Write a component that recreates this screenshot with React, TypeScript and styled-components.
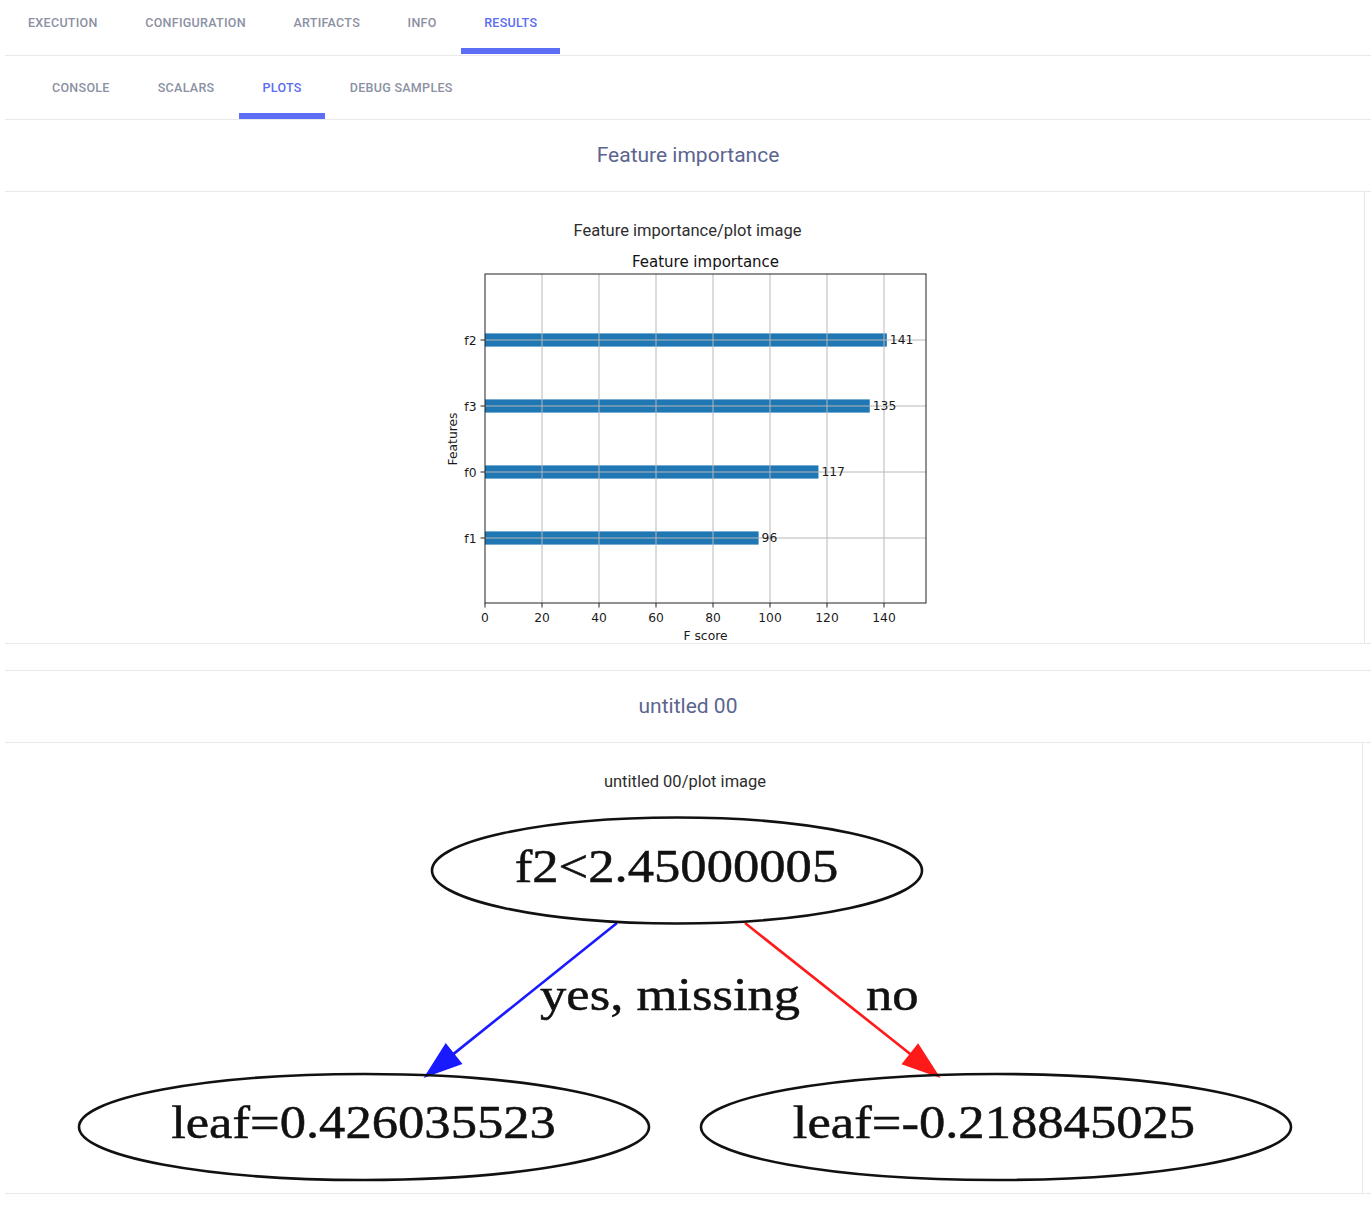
import React from 'react';
import styled, { createGlobalStyle } from 'styled-components';

const GlobalStyle = createGlobalStyle`
  html, body {
    margin: 0;
    padding: 0;
    background: #ffffff;
    font-family: Roboto, 'Liberation Sans', Arial, sans-serif;
  }
`;

const Page = styled.div`
  padding-left: 5px;
  width: 1366px;
`;

// main tabs and sub tabs share one look, only height differs
const TabBar = styled.div<{ $height: number; $padLeft?: number; $gap: number }>`
  display: flex;
  gap: ${({ $gap }) => $gap}px;
  height: ${({ $height }) => $height}px;
  box-sizing: border-box;
  padding-left: ${({ $padLeft }) => $padLeft ?? 0}px;
  border-bottom: 1px solid #e9e9e9;
`;

const Tab = styled.div<{ $active?: boolean; $height: number; $top: number }>`
  box-sizing: border-box;
  height: ${({ $height }) => $height}px;
  padding: ${({ $top }) => $top}px 23px 0;
  line-height: 14px;
  font-size: 12.5px;
  font-weight: 500;
  letter-spacing: 0.3px;
  text-transform: uppercase;
  color: ${({ $active }) => ($active ? '#5a6cf2' : '#8b90a3')};
  border-bottom: 6px solid
    ${({ $active }) => ($active ? '#5b6ef5' : 'transparent')};
  cursor: pointer;
`;

const Section = styled.section<{ $spaced?: boolean }>`
  margin-top: ${({ $spaced }) => ($spaced ? 26 : 0)}px;
`;

const SectionHeader = styled.div<{ $topLine?: boolean }>`
  height: ${({ $topLine }) => ($topLine ? 73 : 72)}px;
  box-sizing: border-box;
  padding-bottom: 2px;
  display: flex;
  align-items: center;
  justify-content: center;
  border-top: ${({ $topLine }) => ($topLine ? '1px solid #e9e9e9' : 'none')};
  border-bottom: 1px solid #e9e9e9;
  font-size: 21px;
  color: #5b6590;
`;

const Panel = styled.div`
  border-bottom: 1px solid #e9e9e9;
`;

const PanelInner = styled.div<{ $inset: number; $padLeft: number }>`
  margin-right: ${({ $inset }) => $inset}px;
  padding-left: ${({ $padLeft }) => $padLeft}px;
  padding-top: 29px;
  border-right: 1px solid #e6e6e6;
  display: flex;
  flex-direction: column;
  align-items: center;
`;

const PlotTitle = styled.div`
  font-size: 16.5px;
  line-height: 19px;
  color: #2e2e2e;
  margin-bottom: 8px;
`;

const PlotSvg = styled.svg`
  display: block;
`;

const chartFont = "'DejaVu Sans', Verdana, sans-serif";
const treeFont = "'Liberation Serif', 'Times New Roman', serif";

const features = [
  { name: 'f2', value: 141, y: 340 },
  { name: 'f3', value: 135, y: 406 },
  { name: 'f0', value: 117, y: 472 },
  { name: 'f1', value: 96, y: 538 },
];

const X0 = 485;
const PX_PER_UNIT = 2.85;
const xTicks = [0, 20, 40, 60, 80, 100, 120, 140];

const ImportanceChart: React.FC = () => (
  <PlotSvg width={495} height={395} viewBox="440 248 495 395">
    <text
      x={705.5}
      y={267}
      textAnchor="middle"
      fontFamily={chartFont}
      fontSize={15}
      fill="#111"
    >
      Feature importance
    </text>
    <rect x={X0} y={274} width={441} height={329} fill="#fff" />
    {features.map((f) => (
      <rect
        key={f.name}
        x={X0}
        y={f.y - 6.6}
        width={f.value * PX_PER_UNIT}
        height={13.2}
        fill="#1f77b4"
      />
    ))}
    {xTicks.slice(1).map((t) => (
      <line
        key={t}
        x1={X0 + t * PX_PER_UNIT}
        x2={X0 + t * PX_PER_UNIT}
        y1={274}
        y2={603}
        stroke="#b8b8b8"
        strokeWidth={1}
      />
    ))}
    {features.map((f) => (
      <line
        key={f.name}
        x1={X0}
        x2={926}
        y1={f.y}
        y2={f.y}
        stroke="#b8b8b8"
        strokeWidth={1}
      />
    ))}
    <rect
      x={X0}
      y={274}
      width={441}
      height={329}
      fill="none"
      stroke="#222"
      strokeWidth={1}
    />
    {xTicks.map((t) => (
      <g key={t}>
        <line
          x1={X0 + t * PX_PER_UNIT}
          x2={X0 + t * PX_PER_UNIT}
          y1={603}
          y2={607.5}
          stroke="#222"
        />
        <text
          x={X0 + t * PX_PER_UNIT}
          y={621.5}
          textAnchor="middle"
          fontFamily={chartFont}
          fontSize={12.3}
          fill="#1a1a1a"
        >
          {t}
        </text>
      </g>
    ))}
    {features.map((f) => (
      <g key={f.name}>
        <line x1={480.5} x2={X0} y1={f.y} y2={f.y} stroke="#222" />
        <text
          x={476.5}
          y={f.y + 4.5}
          textAnchor="end"
          fontFamily={chartFont}
          fontSize={12.3}
          fill="#1a1a1a"
        >
          {f.name}
        </text>
        <text
          x={X0 + f.value * PX_PER_UNIT + 3}
          y={f.y + 4.3}
          fontFamily={chartFont}
          fontSize={12.3}
          fill="#1a1a1a"
        >
          {f.value}
        </text>
      </g>
    ))}
    <text
      x={705.5}
      y={639.5}
      textAnchor="middle"
      fontFamily={chartFont}
      fontSize={12.3}
      fill="#1a1a1a"
    >
      F score
    </text>
    <text
      x={457}
      y={439}
      textAnchor="middle"
      fontFamily={chartFont}
      fontSize={12.3}
      fill="#1a1a1a"
      transform="rotate(-90 457 439)"
    >
      Features
    </text>
  </PlotSvg>
);

type Pt = [number, number];

// edge with a filled arrowhead ending at tip
const Edge: React.FC<{ from: Pt; tip: Pt; color: string }> = ({
  from,
  tip,
  color,
}) => {
  const dx = tip[0] - from[0];
  const dy = tip[1] - from[1];
  const len = Math.hypot(dx, dy);
  const ux = dx / len;
  const uy = dy / len;
  const bx = tip[0] - ux * 35;
  const by = tip[1] - uy * 35;
  const px = -uy * 12;
  const py = ux * 12;
  return (
    <g>
      <line
        x1={from[0]}
        y1={from[1]}
        x2={bx}
        y2={by}
        stroke={color}
        strokeWidth={2.6}
      />
      <polygon
        points={`${tip[0]},${tip[1]} ${bx + px},${by + py} ${bx - px},${by - py}`}
        fill={color}
        stroke={color}
        strokeWidth={2}
      />
    </g>
  );
};

// the graph image is stretched sideways, so the labels are too
const TreeLabel: React.FC<{
  x: number;
  y: number;
  anchor?: 'middle' | 'start';
  children: string;
}> = ({ x, y, anchor = 'middle', children }) => (
  <text
    transform={`translate(${x} ${y}) scale(1.12 1)`}
    textAnchor={anchor}
    fontFamily={treeFont}
    fontSize={47}
    fill="#111"
    stroke="#111"
    strokeWidth={0.5}
  >
    {children}
  </text>
);

const nodes = [
  { cx: 677, cy: 870.5, rx: 245, ry: 53, label: 'f2<2.45000005', tx: 676.5, ty: 882 },
  { cx: 364, cy: 1127, rx: 285, ry: 53, label: 'leaf=0.426035523', tx: 363.5, ty: 1138 },
  { cx: 996, cy: 1127, rx: 295, ry: 53, label: 'leaf=-0.218845025', tx: 994, ty: 1138 },
];

const TreeDiagram: React.FC = () => (
  <PlotSvg width={1230} height={394} viewBox="70 799 1230 394">
    <Edge from={[617, 923]} tip={[426, 1076]} color="#1a1aff" />
    <Edge from={[745, 923]} tip={[938, 1076]} color="#ff1a1a" />
    {nodes.map((n) => (
      <g key={n.label}>
        <ellipse
          cx={n.cx}
          cy={n.cy}
          rx={n.rx}
          ry={n.ry}
          fill="none"
          stroke="#111"
          strokeWidth={2.6}
        />
        <TreeLabel x={n.tx} y={n.ty}>
          {n.label}
        </TreeLabel>
      </g>
    ))}
    <TreeLabel x={540} y={1010} anchor="start">
      yes, missing
    </TreeLabel>
    <TreeLabel x={866} y={1010} anchor="start">
      no
    </TreeLabel>
  </PlotSvg>
);

const mainTabs = ['Execution', 'Configuration', 'Artifacts', 'Info', 'Results'];
const subTabs = ['Console', 'Scalars', 'Plots', 'Debug samples'];

const App: React.FC = () => (
  <>
    <GlobalStyle />
    <Page>
      <TabBar $height={56} $gap={1.5}>
        {mainTabs.map((t) => (
          <Tab key={t} $height={54} $top={16} $active={t === 'Results'}>
            {t}
          </Tab>
        ))}
      </TabBar>
      <TabBar $height={64} $padLeft={24} $gap={2}>
        {subTabs.map((t) => (
          <Tab key={t} $height={63} $top={25} $active={t === 'Plots'}>
            {t}
          </Tab>
        ))}
      </TabBar>

      <Section>
        <SectionHeader>Feature importance</SectionHeader>
        <Panel>
          <PanelInner $inset={6} $padLeft={6}>
            <PlotTitle>Feature importance/plot image</PlotTitle>
            <ImportanceChart />
          </PanelInner>
        </Panel>
      </Section>

      <Section $spaced>
        <SectionHeader $topLine>untitled 00</SectionHeader>
        <Panel>
          <PanelInner $inset={8} $padLeft={3}>
            <PlotTitle>untitled 00/plot image</PlotTitle>
            <TreeDiagram />
          </PanelInner>
        </Panel>
      </Section>
    </Page>
  </>
);

export default App;
